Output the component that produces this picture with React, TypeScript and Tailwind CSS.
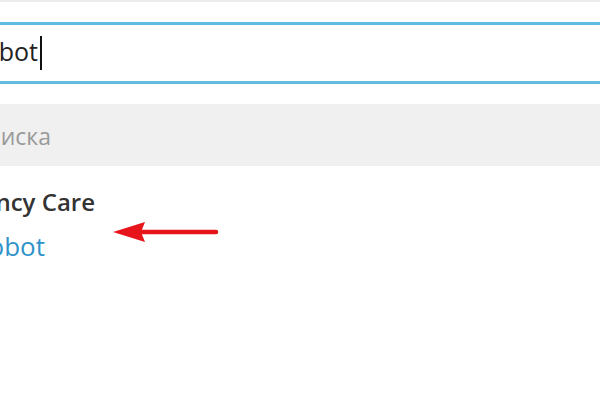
import React from "react";

export default function App() {
  const font = { fontFamily: '"Open Sans", "Noto Sans", sans-serif' };
  return (
    <div className="w-[600px] h-[400px] bg-white overflow-hidden relative" style={font}>
      <div className="h-[2px] bg-[#ececec]" />
      <div className="h-[20px]" />
      <div className="h-[62px] border-y-[3px] border-[#63bce0] flex items-start pt-[13px]">
        <div className="w-[38px] flex justify-end whitespace-nowrap">
          <span className="text-[25px] text-[#222] leading-none pt-[1px]">@carerobot</span>
        </div>
        <div className="w-[2px] h-[34px] bg-[#111] -mt-[2px] ml-[2px]" />
      </div>
      <div className="h-[20px]" />
      <div className="h-[62px] bg-[#f0f0f0] flex items-center">
        <div className="w-[51px] flex justify-end whitespace-nowrap">
          <span className="text-[23px] text-[#9a9a9a] leading-none pt-[2px]">Результаты поиска</span>
        </div>
      </div>
      <div className="pt-[24px] flex flex-col gap-[19px]">
        <div className="w-[95px] flex justify-end whitespace-nowrap">
          <span className="text-[24px] font-semibold text-[#333] leading-none">Emergency Care</span>
        </div>
        <div className="w-[45px] flex justify-end whitespace-nowrap">
          <span className="text-[26px] text-[#2f93c9] leading-none">@carerobot</span>
        </div>
      </div>
      <svg
        width="110"
        height="24"
        viewBox="0 0 110 24"
        className="absolute left-[110px] top-[220px]"
      >
        <line x1="30" y1="12" x2="106" y2="12" stroke="#e8141b" strokeWidth="4.5" strokeLinecap="round" />
        <polygon points="3,12 35,2 31,12 35,22" fill="#e8141b" />
      </svg>
    </div>
  );
}
